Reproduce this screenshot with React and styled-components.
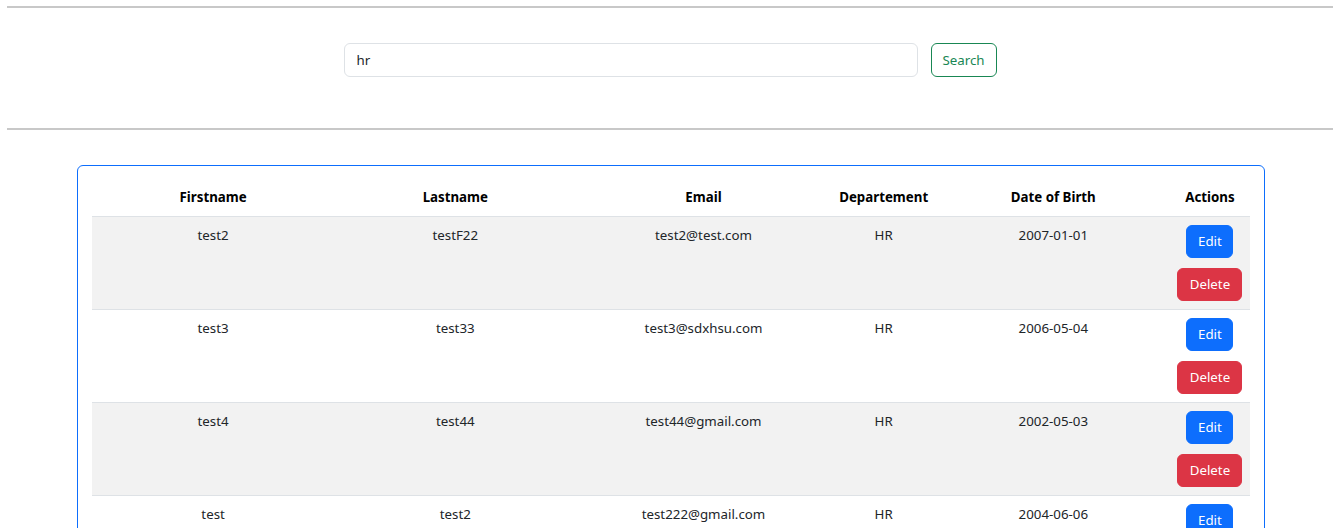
import React from "react";
import styled, { createGlobalStyle } from "styled-components";

const GlobalStyle = createGlobalStyle`
  html, body { margin: 0; padding: 0; background: #fff; }
  body {
    font-family: "Segoe UI", "Noto Sans", "Liberation Sans", sans-serif;
    font-size: 13.3px;
    line-height: 21px;
    color: #212529;
  }
  * { box-sizing: border-box; }
`;

const Page = styled.div`
  padding: 6px 7px 0;
`;

const Rule = styled.hr`
  margin: 0;
  border: 0;
  border-top: 2px solid #c8c8c8;
  height: 0;
`;

const SearchBar = styled.form`
  display: flex;
  justify-content: center;
  gap: 13px;
  padding: 35px 0 51px;
`;

const SearchInput = styled.input`
  width: 574px;
  height: 34px;
  padding: 6px 12px;
  font: inherit;
  color: #212529;
  border: 1px solid #dee2e6;
  border-radius: 6px;
  outline: none;
`;

const OutlineButton = styled.button`
  height: 34px;
  width: 66px;
  padding: 0;
  font: inherit;
  color: #198754;
  background: #fff;
  border: 1px solid #198754;
  border-radius: 6px;
  cursor: pointer;
`;

const Card = styled.div`
  margin: 35px 68px 0 70px;
  border: 1px solid #0d6efd;
  border-radius: 6px;
  padding: 13px 14px 0;
  height: 400px;
`;

const Table = styled.table`
  width: 100%;
  border-collapse: collapse;
  table-layout: fixed;
`;

const Th = styled.th`
  width: ${(p) => p.$w}px;
  padding: 8px;
  font-weight: 700;
  color: #000;
  text-align: center;
  border-bottom: 1px solid #dee2e6;
`;

const Tr = styled.tr`
  background: ${(p) => (p.$striped ? "#f2f2f2" : "#fff")};
`;

const Td = styled.td`
  padding: 8px;
  text-align: center;
  vertical-align: top;
  border-bottom: 1px solid #dee2e6;
`;

const Actions = styled.div`
  display: flex;
  flex-direction: column;
  align-items: center;
  gap: 10px;
`;

const ActionButton = styled.button`
  height: 33px;
  width: ${(p) => (p.$variant === "danger" ? 65 : 47)}px;
  padding: 0;
  font: inherit;
  color: #fff;
  background: ${(p) => (p.$variant === "danger" ? "#dc3545" : "#0d6efd")};
  border: 1px solid ${(p) => (p.$variant === "danger" ? "#dc3545" : "#0d6efd")};
  border-radius: 6px;
  cursor: pointer;
`;

const columns = [
  { label: "Firstname", w: 242 },
  { label: "Lastname", w: 242 },
  { label: "Email", w: 254 },
  { label: "Departement", w: 106 },
  { label: "Date of Birth", w: 233 },
  { label: "Actions", w: 80 },
];

const rows = [
  ["test2", "testF22", "test2@test.com", "HR", "2007-01-01"],
  ["test3", "test33", "test3@sdxhsu.com", "HR", "2006-05-04"],
  ["test4", "test44", "test44@gmail.com", "HR", "2002-05-03"],
  ["test", "test2", "test222@gmail.com", "HR", "2004-06-06"],
];

export default function App() {
  return (
    <>
      <GlobalStyle />
      <Page>
        <Rule />
        <SearchBar onSubmit={(e) => e.preventDefault()}>
          <SearchInput defaultValue="hr" />
          <OutlineButton type="submit">Search</OutlineButton>
        </SearchBar>
        <Rule />
        <Card>
          <Table>
            <thead>
              <tr>
                {columns.map((c) => (
                  <Th key={c.label} $w={c.w}>
                    {c.label}
                  </Th>
                ))}
              </tr>
            </thead>
            <tbody>
              {rows.map((r, i) => (
                <Tr key={i} $striped={i % 2 === 0}>
                  {r.map((v, j) => (
                    <Td key={j}>{v}</Td>
                  ))}
                  <Td>
                    <Actions>
                      <ActionButton>Edit</ActionButton>
                      <ActionButton $variant="danger">Delete</ActionButton>
                    </Actions>
                  </Td>
                </Tr>
              ))}
            </tbody>
          </Table>
        </Card>
      </Page>
    </>
  );
}
